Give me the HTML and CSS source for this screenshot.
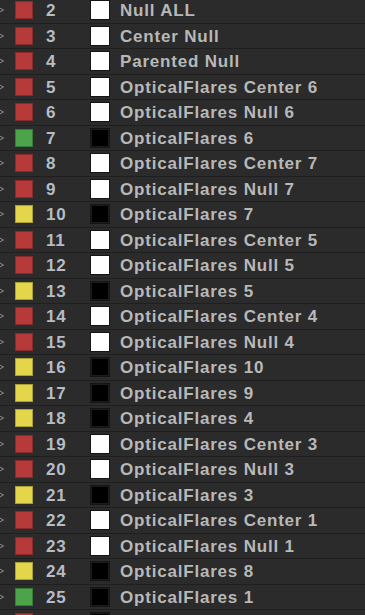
FILE: index.html
```html
<!DOCTYPE html>
<html lang="en">
<head>
  <meta charset="UTF-8" />
  <title>Layers</title>
  <link rel="stylesheet" href="styles.css">
</head>
<body>
  <div class="layers" id="layers"></div>

  <script>
    // layer list: number, label colour, fill (w = white solid, b = black), name
    const layers = [
      [2, 'red', 'w', 'Null ALL'],
      [3, 'red', 'w', 'Center Null'],
      [4, 'red', 'w', 'Parented Null'],
      [5, 'red', 'w', 'OpticalFlares Center 6'],
      [6, 'red', 'w', 'OpticalFlares Null 6'],
      [7, 'green', 'b', 'OpticalFlares 6'],
      [8, 'red', 'w', 'OpticalFlares Center 7'],
      [9, 'red', 'w', 'OpticalFlares Null 7'],
      [10, 'yellow', 'b', 'OpticalFlares 7'],
      [11, 'red', 'w', 'OpticalFlares Center 5'],
      [12, 'red', 'w', 'OpticalFlares Null 5'],
      [13, 'yellow', 'b', 'OpticalFlares 5'],
      [14, 'red', 'w', 'OpticalFlares Center 4'],
      [15, 'red', 'w', 'OpticalFlares Null 4'],
      [16, 'yellow', 'b', 'OpticalFlares 10'],
      [17, 'yellow', 'b', 'OpticalFlares 9'],
      [18, 'yellow', 'b', 'OpticalFlares 4'],
      [19, 'red', 'w', 'OpticalFlares Center 3'],
      [20, 'red', 'w', 'OpticalFlares Null 3'],
      [21, 'yellow', 'b', 'OpticalFlares 3'],
      [22, 'red', 'w', 'OpticalFlares Center 1'],
      [23, 'red', 'w', 'OpticalFlares Null 1'],
      [24, 'yellow', 'b', 'OpticalFlares 8'],
      [25, 'green', 'b', 'OpticalFlares 1'],
      [26, 'red', 'b', '']
    ];

    const list = document.getElementById('layers');
    layers.forEach(([num, label, fill, name]) => {
      const row = document.createElement('div');
      row.className = 'row';
      row.innerHTML =
        '<svg class="twirl" width="6" height="10" viewBox="0 0 6 10">' +
          '<polygon points="-3,1.5 3.5,5 -3,8.5" fill="none" stroke="#8a8a8a" stroke-width="1"/>' +
        '</svg>' +
        '<span class="label ' + label + '"></span>' +
        '<span class="num">' + (name ? num : '') + '</span>' +
        '<span class="thumb ' + (fill === 'w' ? 'white' : 'black') + '"></span>' +
        '<span class="name">' + name + '</span>';
      list.appendChild(row);
    });
  </script>
</body>
</html>
```

FILE: styles.css
```css
body {
    margin: 0;
    padding: 0;
    background: #2b2b2b;
    font-family: 'Liberation Sans', Arial, sans-serif;
    overflow: hidden;
}

.layers {
    margin-top: -2px;
}

/* One layer row */
.row {
    height: 24.5px;
    border-bottom: 1px solid #1f1f1f;
    display: flex;
    align-items: center;
}

.twirl {
    flex: none;
    margin-right: 9px;
}

.label {
    flex: none;
    width: 18px;
    height: 18px;
    box-sizing: border-box;
    border: 1px solid rgba(0, 0, 0, 0.25);
}

.red { background: #b63a3a; }
.yellow { background: #e3d64a; }
.green { background: #4ba449; }

.num {
    flex: none;
    width: 44px;
    margin-left: 13px;
    padding-top: 2px;
    font-size: 17px;
    font-weight: bold;
    letter-spacing: 0.7px;
    color: #b6bcc2;
}

.thumb {
    flex: none;
    width: 20px;
    height: 20px;
    box-sizing: border-box;
    border: 1px solid #141414;
}

.thumb.white { background: #ffffff; }
.thumb.black {
    background: #000000;
    box-shadow: inset 0 0 0 1px #1c1c1c;
}

.name {
    margin-left: 10px;
    padding-top: 2px;
    font-size: 17px;
    font-weight: bold;
    letter-spacing: 0.8px;
    color: #b8b8b8;
    white-space: nowrap;
}
```
